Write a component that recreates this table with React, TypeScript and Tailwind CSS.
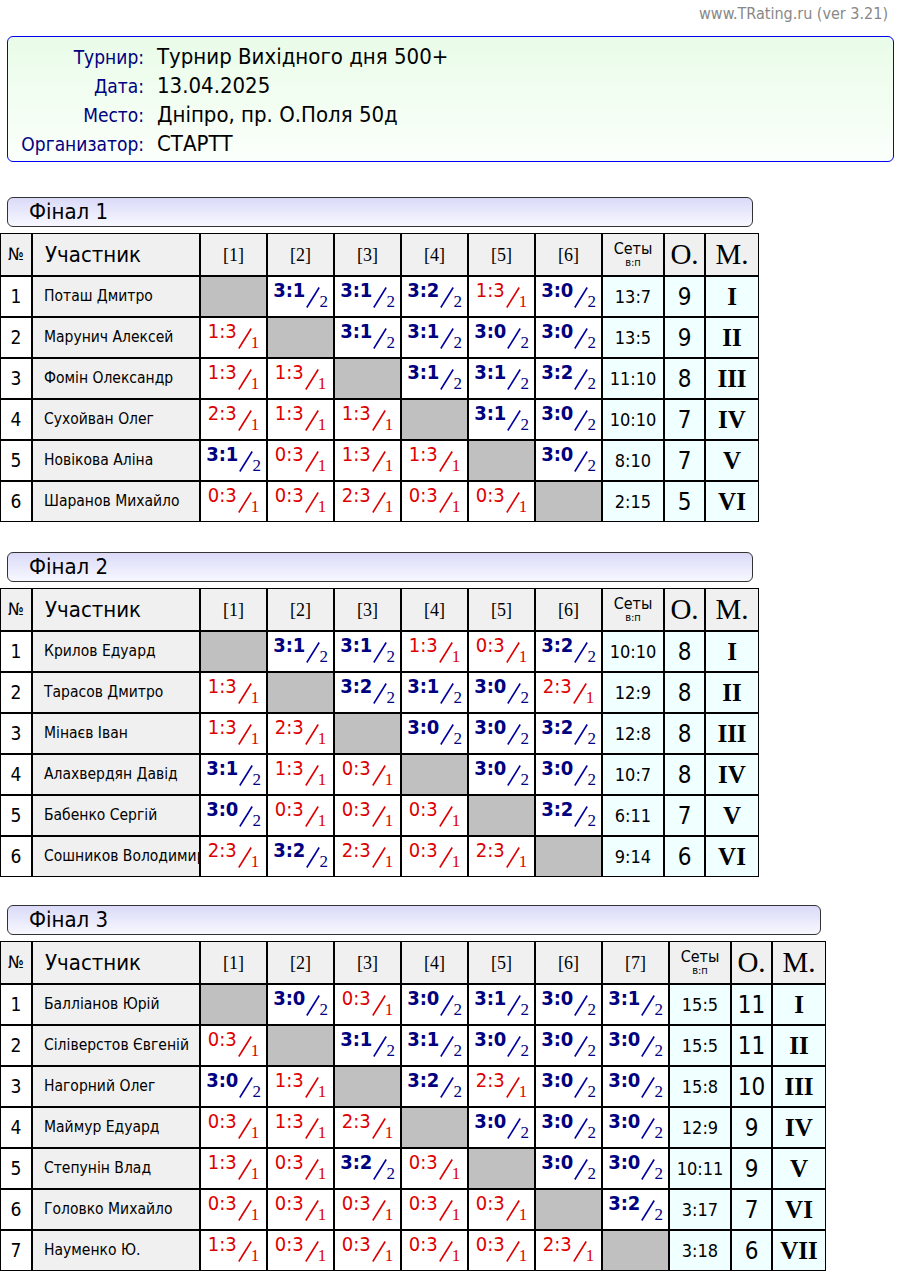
import React from 'react';

const SANS = "font-['DejaVu_Sans_Condensed','DejaVu_Sans',sans-serif]";
const SERIF = "font-['Liberation_Serif',serif]";

type Player = { name: string; res: (string | null)[]; sets: string; pts: string; place: string };

const final1: Player[] = [
  { name: 'Поташ Дмитро', res: [null, '3:1', '3:1', '3:2', '1:3', '3:0'], sets: '13:7', pts: '9', place: 'I' },
  { name: 'Марунич Алексей', res: ['1:3', null, '3:1', '3:1', '3:0', '3:0'], sets: '13:5', pts: '9', place: 'II' },
  { name: 'Фомін Олександр', res: ['1:3', '1:3', null, '3:1', '3:1', '3:2'], sets: '11:10', pts: '8', place: 'III' },
  { name: 'Сухойван Олег', res: ['2:3', '1:3', '1:3', null, '3:1', '3:0'], sets: '10:10', pts: '7', place: 'IV' },
  { name: 'Новікова Аліна', res: ['3:1', '0:3', '1:3', '1:3', null, '3:0'], sets: '8:10', pts: '7', place: 'V' },
  { name: 'Шаранов Михайло', res: ['0:3', '0:3', '2:3', '0:3', '0:3', null], sets: '2:15', pts: '5', place: 'VI' },
];

const final2: Player[] = [
  { name: 'Крилов Едуард', res: [null, '3:1', '3:1', '1:3', '0:3', '3:2'], sets: '10:10', pts: '8', place: 'I' },
  { name: 'Тарасов Дмитро', res: ['1:3', null, '3:2', '3:1', '3:0', '2:3'], sets: '12:9', pts: '8', place: 'II' },
  { name: 'Мінаєв Іван', res: ['1:3', '2:3', null, '3:0', '3:0', '3:2'], sets: '12:8', pts: '8', place: 'III' },
  { name: 'Алахвердян Давід', res: ['3:1', '1:3', '0:3', null, '3:0', '3:0'], sets: '10:7', pts: '8', place: 'IV' },
  { name: 'Бабенко Сергій', res: ['3:0', '0:3', '0:3', '0:3', null, '3:2'], sets: '6:11', pts: '7', place: 'V' },
  { name: 'Сошников Володимир', res: ['2:3', '3:2', '2:3', '0:3', '2:3', null], sets: '9:14', pts: '6', place: 'VI' },
];

const final3: Player[] = [
  { name: 'Балліанов Юрій', res: [null, '3:0', '0:3', '3:0', '3:1', '3:0', '3:1'], sets: '15:5', pts: '11', place: 'I' },
  { name: 'Сіліверстов Євгеній', res: ['0:3', null, '3:1', '3:1', '3:0', '3:0', '3:0'], sets: '15:5', pts: '11', place: 'II' },
  { name: 'Нагорний Олег', res: ['3:0', '1:3', null, '3:2', '2:3', '3:0', '3:0'], sets: '15:8', pts: '10', place: 'III' },
  { name: 'Маймур Едуард', res: ['0:3', '1:3', '2:3', null, '3:0', '3:0', '3:0'], sets: '12:9', pts: '9', place: 'IV' },
  { name: 'Степунін Влад', res: ['1:3', '0:3', '3:2', '0:3', null, '3:0', '3:0'], sets: '10:11', pts: '9', place: 'V' },
  { name: 'Головко Михайло', res: ['0:3', '0:3', '0:3', '0:3', '0:3', null, '3:2'], sets: '3:17', pts: '7', place: 'VI' },
  { name: 'Науменко Ю.', res: ['1:3', '0:3', '0:3', '0:3', '0:3', '2:3', null], sets: '3:18', pts: '6', place: 'VII' },
];

function Score({ s }: { s: string }) {
  const [a, b] = s.split(':').map(Number);
  const win = a > b;
  return (
    <div className="flex justify-center items-start h-full">
      <span
        className={`mt-[3px] text-[20px] leading-[20px] ${win ? 'font-bold text-[#000080]' : 'font-normal text-[#dd0000]'}`}
      >
        {s}
      </span>
      <svg className="mt-[10px] ml-[1px] shrink-0" width="14" height="21" viewBox="0 0 14 21">
        <line x1="0.8" y1="20.5" x2="13.2" y2="0.5" stroke={win ? '#0000a0' : '#dd0000'} strokeWidth="1.6" />
      </svg>
      <span
        className={`${SERIF} mt-[16px] -ml-[1px] text-[17px] leading-[17px] ${win ? 'text-[#000080]' : 'text-[#dd0000]'}`}
      >
        {win ? 2 : 1}
      </span>
    </div>
  );
}

function Final({
  title,
  players,
  boxW,
  tableW,
}: {
  title: string;
  players: Player[];
  boxW: string;
  tableW: string;
}) {
  const cell = 'border border-black';
  return (
    <div>
      <div
        className={`ml-[7px] ${boxW} h-[30px] border border-[#333] rounded-[6px] bg-gradient-to-b from-[#dadaf8] to-[#f8f8ff] pl-[21px] text-[22px] leading-[27px] text-black`}
      >
        {title}
      </div>
      <table className={`mt-[6px] ${tableW} table-fixed border-separate border-spacing-0 text-black`}>
        <thead>
          <tr>
            <th className={`${cell} w-[32px] h-[43px] bg-[#f0f0f0] font-normal text-[17px] leading-none`}>№</th>
            <th className={`${cell} w-[168px] bg-[#f0f0f0] font-normal text-[22px] leading-none text-left pl-[12px]`}>
              Участник
            </th>
            {players.map((_, i) => (
              <th key={i} className={`${cell} w-[67px] bg-[#f0f0f0] font-normal ${SERIF} text-[18px] leading-none`}>
                [{i + 1}]
              </th>
            ))}
            <th className={`${cell} w-[62px] bg-[#f0f0f0] font-normal leading-none`}>
              <div className="text-[16px] leading-[16px]">Сеты</div>
              <div className="text-[11px] leading-[12px]">в:п</div>
            </th>
            <th className={`${cell} w-[41px] bg-[#f0f0f0] font-normal ${SERIF} text-[29px] leading-none`}>О.</th>
            <th className={`${cell} w-[54px] bg-[#f0f0f0] font-normal ${SERIF} text-[29px] leading-none`}>М.</th>
          </tr>
        </thead>
        <tbody>
          {players.map((p, r) => (
            <tr key={r}>
              <td className={`${cell} h-[41px] bg-white text-center text-[19px] leading-none`}>{r + 1}</td>
              <td
                className={`${cell} bg-[#f0f0f0] pl-[11px] text-[15.5px] leading-none whitespace-nowrap overflow-hidden`}
              >
                {p.name}
              </td>
              {p.res.map((s, c) =>
                s === null ? (
                  <td key={c} className={`${cell} bg-[#c0c0c0]`} />
                ) : (
                  <td key={c} className={`${cell} bg-white p-0 align-top`}>
                    <Score s={s} />
                  </td>
                )
              )}
              <td className={`${cell} bg-[#f0ffff] text-center text-[18px] leading-none`}>{p.sets}</td>
              <td className={`${cell} bg-[#f0ffff] text-center text-[24px] leading-none`}>{p.pts}</td>
              <td className={`${cell} bg-[#f0ffff] text-center ${SERIF} font-bold text-[25px] leading-none`}>
                {p.place}
              </td>
            </tr>
          ))}
        </tbody>
      </table>
    </div>
  );
}

export default function App() {
  return (
    <div className={`${SANS} w-[900px] min-h-[1271px] bg-white`}>
      <div className="h-[36px] pt-[4px] pr-[12px] text-right text-[16px] leading-[20px] text-[#888888]">
        www.TRating.ru (ver 3.21)
      </div>
      <div className="ml-[7px] w-[887px] h-[126px] border-[1.5px] border-[#0000ee] rounded-[6px] bg-gradient-to-b from-[#e9fce8] to-[#fbfffb] pt-[5px]">
        {[
          ['Турнир:', 'Турнир Вихідного дня 500+'],
          ['Дата:', '13.04.2025'],
          ['Место:', 'Дніпро, пр. О.Поля 50д'],
          ['Организатор:', 'СТАРТТ'],
        ].map(([l, v]) => (
          <div key={l} className="flex items-baseline h-[29px]">
            <div className="w-[136px] text-right text-[19px] text-[#000080]">{l}</div>
            <div className="ml-[13px] text-[22px] leading-[29px] text-black">{v}</div>
          </div>
        ))}
      </div>
      <div className="mt-[35px]">
        <Final title="Фінал 1" players={final1} boxW="w-[746px]" tableW="w-[759px]" />
      </div>
      <div className="mt-[30px]">
        <Final title="Фінал 2" players={final2} boxW="w-[746px]" tableW="w-[759px]" />
      </div>
      <div className="mt-[28px]">
        <Final title="Фінал 3" players={final3} boxW="w-[814px]" tableW="w-[826px]" />
      </div>
    </div>
  );
}
